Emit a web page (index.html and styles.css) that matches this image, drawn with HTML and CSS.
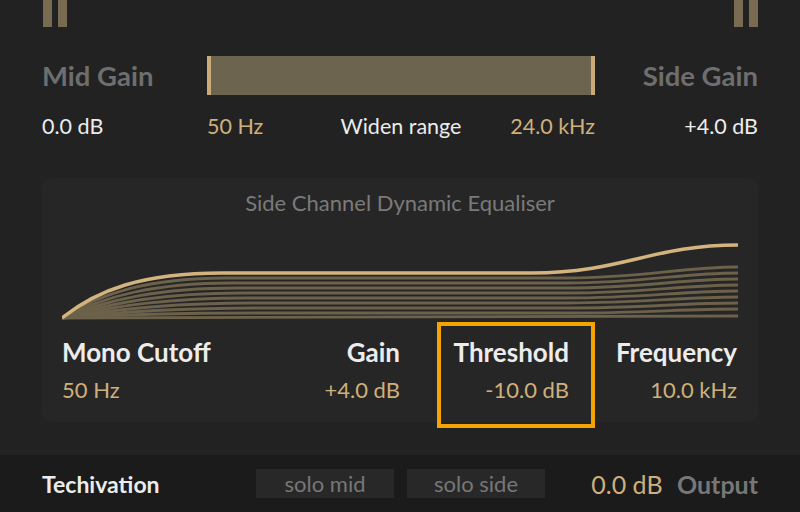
FILE: index.html
```html
<html charset="UTF-8">

<head>
  <link rel="stylesheet" href="styles.css">
</head>

<body>
  <div id="container">
    <div id="meters">
      <div class="meterPair"><span class="meter"></span><span class="meter"></span></div>
      <div class="meterPair"><span class="meter"></span><span class="meter"></span></div>
    </div>

    <div id="gainRow">
      <div class="gainLabel">Mid Gain</div>
      <div id="rangeBar"></div>
      <div class="gainLabel right">Side Gain</div>
    </div>

    <div id="valueRow">
      <div class="white">0.0 dB</div>
      <div id="rangeValues">
        <span class="gold">50 Hz</span>
        <span class="white">Widen range</span>
        <span class="gold end">24.0 kHz</span>
      </div>
      <div class="white right">+4.0 dB</div>
    </div>

    <div id="panel">
      <div id="panelTitle">Side Channel Dynamic Equaliser</div>
      <svg id="eqGraph" width="676" height="80" viewBox="0 0 676 80">
        <g fill="none" stroke="#6c614a" stroke-width="2.8">
          <path d="M0,78 C39,53 86,38 165,38 L505,38 C580,38 620,27 676,27" />
          <path d="M0,78 C43,56 92,43 170,43 L505,43 C580,43 620,33 676,33" />
          <path d="M0,78 C47,59 98,48 175,48 L505,48 C580,48 620,39 676,39" />
          <path d="M0,78 C51,62 104,53 180,53 L505,53 C580,53 620,45 676,45" />
          <path d="M0,78 C55,65 110,58 185,58 L505,58 C580,58 620,51 676,51" />
          <path d="M0,78 C59,68 116,63 190,63 L505,63 C580,63 620,57 676,57" />
          <path d="M0,78 C63,71 122,68 195,68 L505,68 C580,68 620,63 676,63" />
          <path d="M0,78 C67,74 128,73 200,73 L505,73 C580,73 620,69 676,69" />
          <path d="M0,78 L676,76" />
        </g>
        <path d="M0,78 C35,50 80,33 160,33 L470,33 C560,33 590,5 676,5" fill="none" stroke="#d3b47e" stroke-width="3.4" />
      </svg>

      <div id="params">
        <div class="param">
          <div class="paramLabel">Mono Cutoff</div>
          <div class="paramValue">50 Hz</div>
        </div>
        <div class="param right">
          <div class="paramLabel">Gain</div>
          <div class="paramValue">+4.0 dB</div>
        </div>
        <div class="param right selected">
          <div class="paramLabel">Threshold</div>
          <div class="paramValue">-10.0 dB</div>
        </div>
        <div class="param right last">
          <div class="paramLabel">Frequency</div>
          <div class="paramValue">10.0 kHz</div>
        </div>
      </div>
    </div>

    <footer>
      <div id="brand">Techivation</div>
      <div class="soloButton">solo mid</div>
      <div class="soloButton">solo side</div>
      <div id="output">
        <span class="gold">0.0 dB</span>
        <span id="outputLabel">Output</span>
      </div>
    </footer>
  </div>
</body>

</html>
```

FILE: styles.css
```css
body {
  margin: 0;
  background-color: #222222;
  font-family: Lato, "Open Sans", sans-serif;
  overflow: hidden;
}

#container {
  display: flex;
  flex-direction: column;
  width: 800px;
  height: 512px;
}

.white {
  color: #ececec;
}

.gold {
  color: #cfb07b;
}

.right {
  text-align: right;
}

#meters {
  display: flex;
  justify-content: space-between;
  height: 27px;
  padding: 0 42px 0 43px;
}

.meterPair {
  display: flex;
  gap: 6px;
}

.meter {
  width: 9px;
  height: 27px;
  background-color: #786b51;
}

#gainRow {
  display: flex;
  align-items: center;
  margin-top: 29px;
  padding: 0 42px;
  height: 39px;
}

.gainLabel {
  width: 165px;
  font-size: 27.5px;
  font-weight: bold;
  color: #6e6e6e;
  line-height: 39px;
}

.gainLabel.right {
  width: 163px;
}

#rangeBar {
  width: 380px;
  height: 39px;
  background-color: #6d6450;
  border-left: 4px solid #caab77;
  border-right: 4px solid #caab77;
}

#valueRow {
  display: flex;
  align-items: center;
  margin-top: 19px;
  padding: 0 42px;
  height: 24px;
  font-size: 21.5px;
  line-height: 24px;
}

#valueRow > .white {
  width: 165px;
}

#valueRow > .right {
  width: 163px;
}

#rangeValues {
  width: 388px;
  display: grid;
  grid-template-columns: 1fr auto 1fr;
}

#rangeValues .end {
  justify-self: end;
}

#panel {
  margin: 40px 42px 0 42px;
  height: 244px;
  background-color: #262626;
  border-radius: 10px;
  padding: 0 20px;
}

#panelTitle {
  padding-top: 13px;
  line-height: 24px;
  font-size: 22px;
  text-align: center;
  color: #7a7a7a;
}

#eqGraph {
  display: block;
  margin-top: 25px;
}

#params {
  display: flex;
  margin-top: 2px;
}

.param {
  box-sizing: border-box;
  width: 169px;
  height: 106px;
  padding-top: 11px;
  border: 4px solid transparent;
  border-left: 0;
}

.param.right {
  border-left: 4px solid transparent;
  border-right: 0;
}

.param.selected {
  width: 158px;
  margin-left: 37px;
  padding-right: 22px;
  border: 4px solid #f5a300;
}

.param.last {
  width: 143px;
  padding-right: 1px;
}

.paramLabel {
  font-size: 26px;
  font-weight: bold;
  color: #ececec;
  line-height: 30px;
}

.paramValue {
  margin-top: 11px;
  font-size: 22px;
  line-height: 24px;
  color: #cfb07b;
}

footer {
  display: flex;
  align-items: center;
  margin-top: 33px;
  height: 57px;
  padding: 0 42px;
  background-color: #1b1b1b;
}

#brand {
  width: 214px;
  font-size: 23px;
  font-weight: bold;
  color: #ececec;
}

.soloButton {
  width: 138px;
  height: 29px;
  margin-right: 13px;
  background-color: #282828;
  color: #777777;
  font-size: 22px;
  line-height: 29px;
  text-align: center;
}

#output {
  margin-left: auto;
  font-size: 25px;
}

#outputLabel {
  margin-left: 8px;
  font-weight: bold;
  color: #777777;
}
```
